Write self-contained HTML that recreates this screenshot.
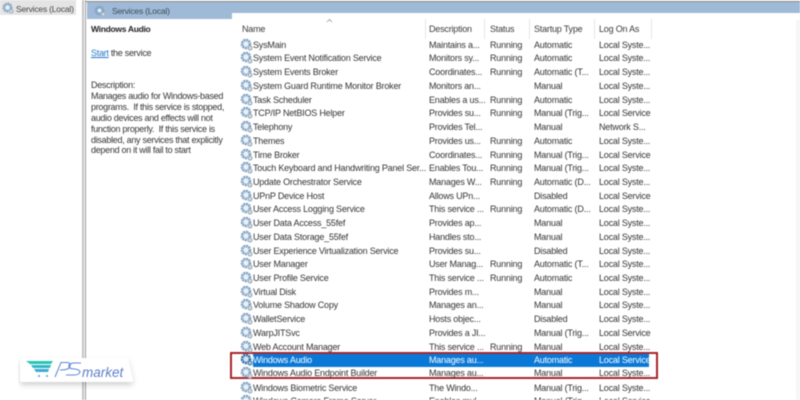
<!DOCTYPE html>
<html><head><meta charset="utf-8">
<style>
html,body{margin:0;padding:0;background:#fff}
#p{position:relative;width:800px;height:400px;overflow:hidden;background:#fff;font-family:"Liberation Sans",sans-serif;font-size:9px;letter-spacing:-.2px;color:#333;filter:blur(.4px)}
.a{position:absolute;white-space:nowrap}
.r{position:absolute;left:0;width:800px;height:14px;line-height:14px}
.r span{position:absolute;white-space:nowrap;top:0}
.n{left:253px}.d{left:429px}.s{left:490px}.t{left:534px}.l{left:599px}
.r svg{position:absolute;left:240px;top:0;width:13px;height:13px}
.h{position:absolute;top:23px;font-size:9px;line-height:12px;color:#3a3a3a}
.v{position:absolute;top:19px;width:1px;height:20px;background:#e6e6e6}
</style></head><body><div id="p">
<svg width="0" height="0" style="position:absolute"><defs>
<symbol id="g" viewBox="0 0 13 13"><circle cx="6" cy="6" r="3.9" fill="none" stroke="#7fa3c4" stroke-width="2.8" stroke-dasharray="2 .6"/><circle cx="6" cy="6" r="2" fill="#e9f0f6"/><circle cx="10" cy="10" r="2.6" fill="#a9b7c2"/><circle cx="10" cy="10" r="1" fill="#eef2f5"/></symbol>
<symbol id="gs" viewBox="0 0 13 13"><circle cx="6" cy="6" r="3.9" fill="none" stroke="#2f6fa8" stroke-width="2.8" stroke-dasharray="2 .6"/><circle cx="6" cy="6" r="2" fill="#cfe2f2"/><circle cx="10" cy="10" r="2.6" fill="#5b8db8"/><circle cx="10" cy="10" r="1" fill="#d8e6f2"/></symbol>
</defs></svg>

<div class="a" style="left:0;top:0;width:76px;height:15px;background:#e4e4e4"></div>
<svg class="a" style="left:2px;top:2px" width="12" height="12"><use href="#g"/></svg>
<div class="a" style="left:16px;top:3px;font-size:8.5px;letter-spacing:-.2px;line-height:12px;color:#444">Services (Local)</div>
<div class="a" style="left:82px;top:0;width:2px;height:400px;background:#c4c4c4"></div>
<div class="a" style="left:85px;top:0;width:1px;height:400px;background:#9a9a9a"></div>

<div class="a" style="left:86px;top:1px;width:714px;height:1px;background:#8a8a8a"></div>
<div class="a" style="left:87px;top:2px;width:713px;height:11px;background:#9fbad6"></div>
<div class="a" style="left:87px;top:13px;width:145px;height:6px;background:#9fbad6"></div>
<div class="a" style="left:232px;top:13px;width:568px;height:7px;background:#fff;border-radius:8px 0 0 0"></div>
<div class="a" style="left:796px;top:20px;width:4px;height:380px;background:#f6f6f6"></div>
<svg class="a" style="left:94px;top:5px" width="12" height="12"><use href="#g"/></svg>
<div class="a" style="left:112px;top:5px;font-size:8.5px;letter-spacing:-.2px;line-height:12px;color:#3c4a5a">Services (Local)</div>

<div class="a" style="left:91px;top:23px;font-weight:bold;font-size:8.5px;letter-spacing:-.3px;line-height:12px;color:#222">Windows Audio</div>
<div class="a" style="left:91px;top:47px;line-height:12px;letter-spacing:-.28px"><span style="color:#2a76c6;text-decoration:underline">Start</span> the service</div>
<div class="a" style="left:91px;top:80px;line-height:10.9px;letter-spacing:-.29px;color:#333">Description:<br>Manages audio for Windows-based<br>programs.&nbsp; If this service is stopped,<br>audio devices and effects will not<br>function properly.&nbsp; If this service is<br>disabled, any services that explicitly<br>depend on it will fail to start</div>

<svg class="a" style="left:326px;top:18px" width="7" height="5"><path d="M1 4L3.5 1.5L6 4" fill="none" stroke="#999" stroke-width=".8"/></svg>
<div class="h" style="left:242px">Name</div>
<div class="h" style="left:429px">Description</div>
<div class="h" style="left:490px">Status</div>
<div class="h" style="left:534px">Startup Type</div>
<div class="h" style="left:599px">Log On As</div>
<div class="v" style="left:425px"></div><div class="v" style="left:484px"></div><div class="v" style="left:529px"></div><div class="v" style="left:594px"></div><div class="v" style="left:651px"></div>

<div class="a" style="left:253px;top:354px;width:396px;height:13px;background:#0a78d7"></div>
<div class="a" style="left:230px;top:352px;width:424px;height:23px;border:2px solid #a8262c;box-sizing:content-box"></div>

<div class="r" style="top:37.7px"><svg><use href="#g"/></svg><span class="n">SysMain</span><span class="d">Maintains a...</span><span class="s">Running</span><span class="t">Automatic</span><span class="l">Local Syste...</span></div>
<div class="r" style="top:51.4px"><svg><use href="#g"/></svg><span class="n">System Event Notification Service</span><span class="d">Monitors sy...</span><span class="s">Running</span><span class="t">Automatic</span><span class="l">Local Syste...</span></div>
<div class="r" style="top:65.1px"><svg><use href="#g"/></svg><span class="n">System Events Broker</span><span class="d">Coordinates...</span><span class="s">Running</span><span class="t">Automatic (T...</span><span class="l">Local Syste...</span></div>
<div class="r" style="top:78.9px"><svg><use href="#g"/></svg><span class="n">System Guard Runtime Monitor Broker</span><span class="d">Monitors an...</span><span class="t">Manual</span><span class="l">Local Syste...</span></div>
<div class="r" style="top:92.6px"><svg><use href="#g"/></svg><span class="n">Task Scheduler</span><span class="d">Enables a us...</span><span class="s">Running</span><span class="t">Automatic</span><span class="l">Local Syste...</span></div>
<div class="r" style="top:106.3px"><svg><use href="#g"/></svg><span class="n">TCP/IP NetBIOS Helper</span><span class="d">Provides su...</span><span class="s">Running</span><span class="t">Manual (Trig...</span><span class="l">Local Service</span></div>
<div class="r" style="top:120px"><svg><use href="#g"/></svg><span class="n">Telephony</span><span class="d">Provides Tel...</span><span class="t">Manual</span><span class="l">Network S...</span></div>
<div class="r" style="top:133.7px"><svg><use href="#g"/></svg><span class="n">Themes</span><span class="d">Provides us...</span><span class="s">Running</span><span class="t">Automatic</span><span class="l">Local Syste...</span></div>
<div class="r" style="top:147.5px"><svg><use href="#g"/></svg><span class="n">Time Broker</span><span class="d">Coordinates...</span><span class="s">Running</span><span class="t">Manual (Trig...</span><span class="l">Local Service</span></div>
<div class="r" style="top:161.2px"><svg><use href="#g"/></svg><span class="n">Touch Keyboard and Handwriting Panel Ser...</span><span class="d">Enables Tou...</span><span class="s">Running</span><span class="t">Manual (Trig...</span><span class="l">Local Syste...</span></div>
<div class="r" style="top:174.9px"><svg><use href="#g"/></svg><span class="n">Update Orchestrator Service</span><span class="d">Manages W...</span><span class="s">Running</span><span class="t">Automatic (D...</span><span class="l">Local Syste...</span></div>
<div class="r" style="top:188.6px"><svg><use href="#g"/></svg><span class="n">UPnP Device Host</span><span class="d">Allows UPn...</span><span class="t">Disabled</span><span class="l">Local Service</span></div>
<div class="r" style="top:202.3px"><svg><use href="#g"/></svg><span class="n">User Access Logging Service</span><span class="d">This service ...</span><span class="s">Running</span><span class="t">Automatic (D...</span><span class="l">Local Syste...</span></div>
<div class="r" style="top:216.1px"><svg><use href="#g"/></svg><span class="n">User Data Access_55fef</span><span class="d">Provides ap...</span><span class="t">Manual</span><span class="l">Local Syste...</span></div>
<div class="r" style="top:229.8px"><svg><use href="#g"/></svg><span class="n">User Data Storage_55fef</span><span class="d">Handles sto...</span><span class="t">Manual</span><span class="l">Local Syste...</span></div>
<div class="r" style="top:243.5px"><svg><use href="#g"/></svg><span class="n">User Experience Virtualization Service</span><span class="d">Provides su...</span><span class="t">Disabled</span><span class="l">Local Syste...</span></div>
<div class="r" style="top:257.2px"><svg><use href="#g"/></svg><span class="n">User Manager</span><span class="d">User Manag...</span><span class="s">Running</span><span class="t">Automatic (T...</span><span class="l">Local Syste...</span></div>
<div class="r" style="top:270.9px"><svg><use href="#g"/></svg><span class="n">User Profile Service</span><span class="d">This service ...</span><span class="s">Running</span><span class="t">Automatic</span><span class="l">Local Syste...</span></div>
<div class="r" style="top:284.7px"><svg><use href="#g"/></svg><span class="n">Virtual Disk</span><span class="d">Provides m...</span><span class="t">Manual</span><span class="l">Local Syste...</span></div>
<div class="r" style="top:298.4px"><svg><use href="#g"/></svg><span class="n">Volume Shadow Copy</span><span class="d">Manages an...</span><span class="t">Manual</span><span class="l">Local Syste...</span></div>
<div class="r" style="top:312.1px"><svg><use href="#g"/></svg><span class="n">WalletService</span><span class="d">Hosts objec...</span><span class="t">Disabled</span><span class="l">Local Syste...</span></div>
<div class="r" style="top:325.8px"><svg><use href="#g"/></svg><span class="n">WarpJITSvc</span><span class="d">Provides a JI...</span><span class="t">Manual (Trig...</span><span class="l">Local Service</span></div>
<div class="r" style="top:339.5px"><svg><use href="#g"/></svg><span class="n">Web Account Manager</span><span class="d">This service ...</span><span class="s">Running</span><span class="t">Manual</span><span class="l">Local Syste...</span></div>
<div class="r" style="top:353.3px;color:#fff"><svg><use href="#gs"/></svg><span class="n">Windows Audio</span><span class="d">Manages au...</span><span class="t">Automatic</span><span class="l">Local Service</span></div>
<div class="r" style="top:365.8px"><svg><use href="#g"/></svg><span class="n">Windows Audio Endpoint Builder</span><span class="d">Manages au...</span><span class="t">Manual</span><span class="l">Local Syste...</span></div>
<div class="r" style="top:380.7px"><svg><use href="#g"/></svg><span class="n">Windows Biometric Service</span><span class="d">The Windo...</span><span class="t">Manual (Trig...</span><span class="l">Local Syste...</span></div>
<div class="r" style="top:394.4px"><svg><use href="#g"/></svg><span class="n">Windows Camera Frame Server</span><span class="d">Enables mul...</span><span class="t">Manual (Trig...</span><span class="l">Local Service</span></div>

<svg class="a" style="left:18px;top:355px" width="122" height="40" viewBox="0 0 122 40">
<defs><filter id="sh" x="-10%" y="-20%" width="120%" height="160%"><feDropShadow dx="0" dy="3" stdDeviation="3" flood-color="#000" flood-opacity=".18"/></filter>
<linearGradient id="cg" x1="0" y1="0" x2="0" y2="1"><stop offset="0" stop-color="#25c9b0"/><stop offset="1" stop-color="#3fa6d8"/></linearGradient></defs>
<path d="M2 3H110L115 25Q115 27 112 27H5Q2 27 2 25Z" fill="#fff" filter="url(#sh)"/>
<path d="M8 6H35L33 9H12ZM13 10H33L32 13H15ZM16 14H31L30 17H18Z" fill="url(#cg)"/>
<circle cx="21" cy="21" r="1" fill="#3fa6d8"/><circle cx="29" cy="21" r="1" fill="#3fa6d8"/>
<path d="M37 22L43 7.5H50Q54 9 51 13Q49 15 42 15" fill="none" stroke="#5f86d6" stroke-width="1"/>
<path d="M63 8H55Q50 9 51 12Q52 14 57 14Q62 15 62 17Q61 20 56 20H48" fill="none" stroke="#5f86d6" stroke-width="1.1"/>
<text x="64" y="22" font-family="Liberation Sans,sans-serif" font-style="italic" font-size="13.5" letter-spacing="0" fill="#5f7fc9">market</text>
</svg>
</div></body></html>
